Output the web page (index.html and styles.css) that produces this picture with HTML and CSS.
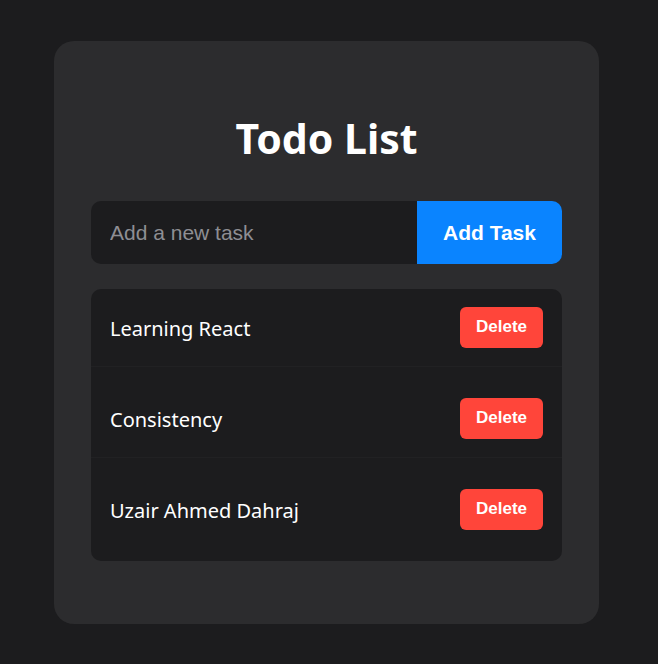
FILE: index.html
```html
<!DOCTYPE html>
<html>
<head>
<meta charset="utf-8">
<link rel="stylesheet" href="styles.css">
</head>
<body>
<div class="card">
  <h1 class="title">Todo List</h1>
  <div class="add-row">
    <input class="task-input" type="text" placeholder="Add a new task">
    <button class="add-btn">Add Task</button>
  </div>
  <ul class="list">
    <li class="item"><span class="item-text">Learning React</span><button class="del-btn">Delete</button></li>
    <li class="item"><span class="item-text">Consistency</span><button class="del-btn">Delete</button></li>
    <li class="item"><span class="item-text">Uzair Ahmed Dahraj</span><button class="del-btn">Delete</button></li>
  </ul>
</div>
</body>
</html>
```
FILE: styles.css
```css
html, body {
  margin: 0;
  padding: 0;
  background: #1c1c1e;
}
body {
  padding: 41px 0 0 54px;
  height: 664px;
  box-sizing: border-box;
}
.card {
  width: 545px;
  box-sizing: border-box;
  background: #2c2c2e;
  border-radius: 20px;
  padding: 68px 37px 63px;
}
.title {
  margin: 0 0 32px;
  text-align: center;
  color: #ffffff;
  font-family: "Noto Sans", sans-serif;
  font-weight: 700;
  font-size: 41px;
  line-height: 58px;
  height: 60px;
}
.add-row {
  display: flex;
  height: 63px;
  margin-bottom: 25px;
}
.task-input {
  flex: 1;
  min-width: 0;
  border: none;
  outline: none;
  background: #1c1c1e;
  border-radius: 10px 0 0 10px;
  padding: 0 19px;
  font-family: "Liberation Sans", Arial, sans-serif;
  font-size: 21px;
  color: #ffffff;
}
.task-input::placeholder {
  color: #8e8e93;
}
.add-btn {
  width: 145px;
  border: none;
  background: #0a84ff;
  color: #ffffff;
  border-radius: 0 10px 10px 0;
  font-family: "Liberation Sans", Arial, sans-serif;
  font-weight: 700;
  font-size: 21px;
  padding: 0;
}
.list {
  list-style: none;
  margin: 0;
  padding: 0;
  background: #1c1c1e;
  border-radius: 10px;
}
.item {
  display: flex;
  align-items: center;
  justify-content: space-between;
  padding: 18px 19px;
  margin: 0 0 13px;
  border-bottom: 1px solid #212123;
}
.item:last-child {
  border-bottom: none;
  margin-bottom: 0;
  padding-bottom: 31px;
}
.item-text {
  color: #ffffff;
  font-family: "Noto Sans", sans-serif;
  font-size: 20px;
  padding-top: 2px;
}
.del-btn {
  width: 83px;
  height: 41px;
  border: none;
  border-radius: 6px;
  background: #ff453a;
  color: #ffffff;
  font-family: "Liberation Sans", Arial, sans-serif;
  font-weight: 700;
  font-size: 17px;
  padding: 0 0 2px;
}
```
